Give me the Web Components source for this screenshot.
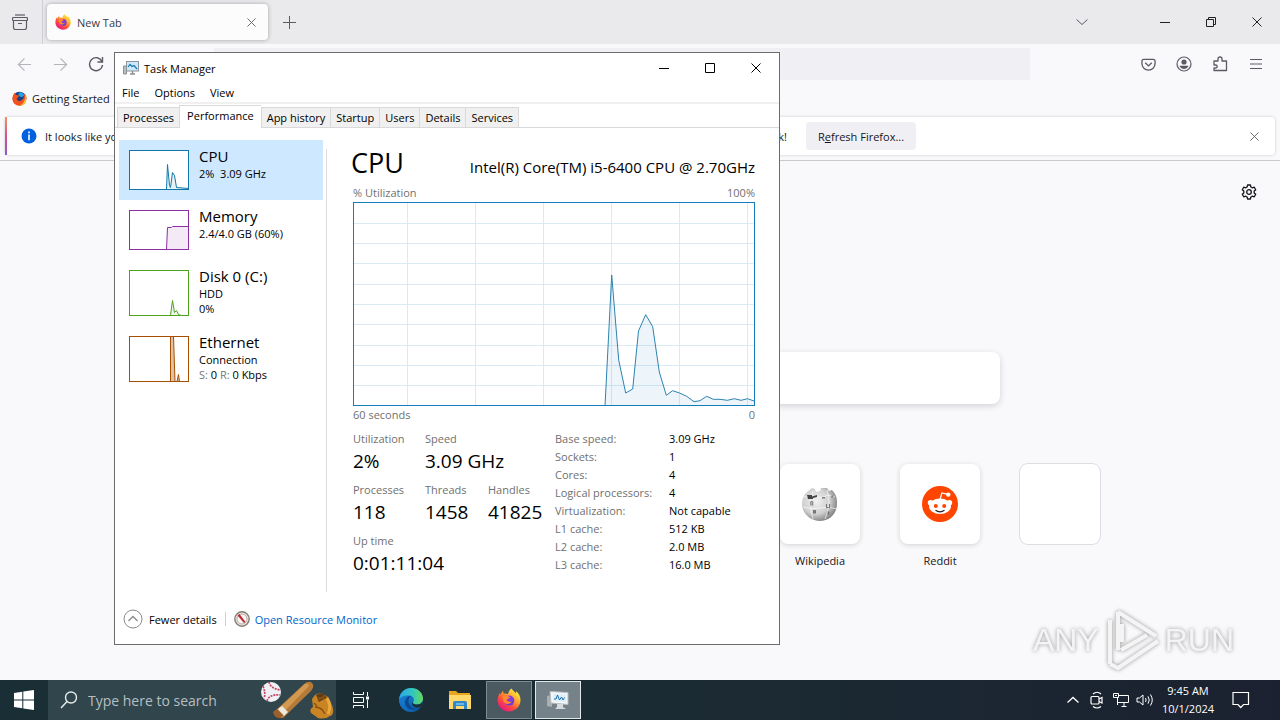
<!DOCTYPE html>
<html lang="en">
<head>
<meta charset="utf-8">
<meta name="viewport" content="width=device-width, initial-scale=1">
<title>Desktop</title>
<style>
  html, body {
    margin: 0;
    height: 100%;
    overflow: hidden;
  }

  body {
    font-family: "Open Sans", "Noto Sans", sans-serif;
    font-size: 11px;
    color: #15141a;
  }
</style>
</head>
<body>
<desktop-screen>
  <browser-window slot="window"></browser-window>
  <task-manager slot="window"></task-manager>
  <desktop-watermark slot="overlay"></desktop-watermark>
  <task-bar slot="taskbar"></task-bar>
</desktop-screen>

<script>
// Icon set, every entry is [viewBox, markup]
const ICONS = {
  archive: ['0 0 16 16', '<g fill="none" stroke="currentColor" stroke-width="1.200"><path d="M3 1h10"/><rect x=".5" y="3.500" width="15" height="3" rx="1"/><path d="M1.500 6.500v7q0 2 2 2h9q2 0 2-2v-7M6 9.500h4"/></g>'],
  close: ['0 0 10 10', '<path d="M.5.5l9 9M9.500.5l-9 9" stroke="currentColor"/>'],
  plus: ['0 0 13 13', '<path d="M6.500 0v13M0 6.500h13" stroke="currentColor"/>'],
  chevronDown: ['0 0 12 8', '<path d="M.5 1.500l5.500 5 5.500-5" fill="none" stroke="currentColor"/>'],
  chevronUp: ['0 0 12 8', '<path d="M.5 6.500l5.500-5 5.500 5" fill="none" stroke="currentColor" stroke-width="1.300"/>'],
  minimize: ['0 0 10 10', '<path d="M0 5.500h10" stroke="currentColor"/>'],
  maximize: ['0 0 10 10', '<path d="M.5.5h9v9h-9z" fill="none" stroke="currentColor"/>'],
  restore: ['0 0 10 10', '<path d="M.5 2.500h7v7h-7zM2.500 2.500v-2h7v7h-2" fill="none" stroke="currentColor"/>'],
  back: ['0 0 16 16', '<path d="M15 8H1.500M8 1.500L1.500 8 8 14.500" fill="none" stroke="currentColor" stroke-width="1.300"/>'],
  forward: ['0 0 16 16', '<path d="M1 8h13.500M8 1.500L14.500 8 8 14.500" fill="none" stroke="currentColor" stroke-width="1.300"/>'],
  reload: ['0 0 16 16', '<path d="M14 5.500A6.500 6.500 0 1 0 14.500 9M14.500 1v5h-5" fill="none" stroke="currentColor" stroke-width="1.400"/>'],
  pocket: ['0 0 16 16', '<g fill="none" stroke="currentColor" stroke-width="1.400"><path d="M3 2.500h10q2 0 2 2V7a7 7 0 0 1-14 0V4.500q0-2 2-2z"/><path d="M4.500 6.200L8 9.500l3.500-3.300"/></g>'],
  account: ['0 0 16 16', '<circle cx="8" cy="8" r="7" fill="none" stroke="currentColor" stroke-width="1.200"/><circle cx="8" cy="6" r="2.600" fill="currentColor"/><path d="M3.500 9.800h9q-1.500 3.200-4.500 3.200T3.500 9.800z" fill="currentColor"/>'],
  extension: ['0 0 16 16', '<path d="M2 5h4V3q0-2 2-2t2 2v2h4.500v9.500H2V12h1.500q1.700 0 1.700-1.500T3.500 9H2z" fill="none" stroke="currentColor" stroke-width="1.300" stroke-linejoin="round"/>'],
  menu: ['0 0 14 12', '<path d="M1 1.500h12M1 6h12M1 10.500h12" stroke="currentColor" stroke-width="1.200"/>'],
  gear: ['0 0 16 16', '<g fill="none" stroke="currentColor" stroke-width="1.300" stroke-linejoin="round"><circle cx="8" cy="8" r="2.300"/><path d="M6.600 1h2.800l.5 2 1.400.8 2-.6 1.400 2.500-1.500 1.400v1.800l1.500 1.400-1.400 2.500-2-.6-1.400.8-.5 2H6.600l-.5-2-1.400-.8-2 .6-1.400-2.500 1.500-1.400V7.100L1.300 5.700l1.400-2.500 2 .6 1.400-.8z"/></g>'],
  info: ['0 0 16 16', '<circle cx="8" cy="8" r="7.500" fill="#0061e0"/><path d="M7.200 3.600h1.600v1.700H7.200zM7.200 6.600h1.600v5.600H7.200z" fill="#fff"/>'],
  firefox: ['0 0 24 24', `
    <defs>
      <linearGradient id="ff-a" x1=".85" y1=".1" x2=".2" y2=".95"><stop offset="0" stop-color="#fff044"/><stop offset=".35" stop-color="#ffa22e"/><stop offset=".65" stop-color="#ff4d3d"/><stop offset="1" stop-color="#e31587"/></linearGradient>
      <linearGradient id="ff-b" x1="0" y1="0" x2="1" y2="1"><stop offset="0" stop-color="#a73ae8"/><stop offset="1" stop-color="#5b3dcf"/></linearGradient>
    </defs>
    <path d="M14.500.5c1 2 3.200 3.200 4.600 4.800.2-.8 0-1.600-.3-2.400C22 5.200 23.700 8.800 23.500 12.600 23.200 18.800 18.200 23.500 12 23.500S.6 18.700.6 12.500c0-3.200 1-5.600 2.300-7.500l.6 1.600C4.300 5.200 5 3.800 6.200 2.800c-.2 1 .1 1.900.6 2.700 1.400-.3 2.900 0 4.200.6C11.600 3.600 12.600 1.700 14.500.5z" fill="url(#ff-a)"/>
    <circle cx="12.300" cy="12.600" r="5" fill="url(#ff-b)"/>
    <path d="M5.500 8.200c2-1.800 4.200-1.300 5.700.2 1 .1 1.700.4 1.600 1-.6 1.300-2.500 1-3.200 2.200.2 2 3 2.900 5.300 1.700-1.300 3-6.400 3.800-8.300.2-1-1.700-1.300-3.400-1.100-5.300z" fill="#ff8a2b"/>`],
  firefoxClassic: ['0 0 24 24', `
    <circle cx="12" cy="12" r="11" fill="#1b3f86"/>
    <path d="M12 2a9 9 0 0 1 8 6l-6 2-4-4z" fill="#23a5dd"/>
    <path d="M22 6c3 8-1 17.500-10 17.500C5.500 23.500.5 18.500.7 12 .8 7.500 3 4 5 2.500c0 2 .5 3 1.500 4l5 .5-2 3.500-2 2c.5 4 6 4.500 8.500 1.500 3-2 4-5 3-8.500z" fill="#f4511e"/>
    <path d="M22 6c3 8-1 17.500-10 17.500 6-2.500 9-7.500 10-17.500z" fill="#ffca28"/>`],
  tmSmall: ['0 0 16 14', '<path d="M.5 5h3v8h-3z" fill="#b9bec3" stroke="#8b9197"/><rect x="3.500" y=".5" width="12" height="9.500" fill="#cfe8f7" stroke="#8a949c"/><path d="M5 6l2-2.500 2 2 2-1L14 8" fill="none" stroke="#1478b4" stroke-width="1.200"/><path d="M7 13h5M9.500 10v3" stroke="#8b9197" stroke-width="1.500"/>'],
  tmLarge: ['0 0 24 20', '<path d="M1 6l5-1v12l-5-1z" fill="#a9aeb2"/><path d="M4 1.500l18 1v12L5 13z" fill="#f4f6f7" stroke="#b6bdc2"/><path d="M7 4l13 .6v7.600L7.600 11z" fill="#dceefa"/><path d="M8 9h2l1.500-4 2 5 2-3 1.500 3 1.500-2.500" fill="none" stroke="#1b6fae"/><path d="M11 14h6v3l3 2H9l2-2z" fill="#d5d9dc"/>'],
  resource: ['0 0 16 16', '<circle cx="8" cy="8" r="7.200" fill="#e9e6e0" stroke="#857f78" stroke-width="1.400"/><circle cx="8" cy="8" r="5" fill="#f7f6f2" stroke="#b6b0a8"/><path d="M3.500 4.500l2-1.500 6 8-1.500 1z" fill="#c22531"/>'],
  fewer: ['0 0 20 20', '<circle cx="10" cy="10" r="9" fill="none" stroke="#8a8a8a"/><path d="M5.500 12L10 7.500l4.500 4.500" fill="none" stroke="#8a8a8a" stroke-width="1.300"/>'],
  wikipedia: ['0 0 36 36', `
    <defs><radialGradient id="wk" cx=".4" cy=".4" r=".65"><stop offset="0" stop-color="#f2f2f2"/><stop offset=".6" stop-color="#cfcfcf"/><stop offset="1" stop-color="#7c7c7c"/></radialGradient></defs>
    <path d="M6 5l4-3 3 1 1 3 4-1 1-3 6 0 2 3 3-1a18 18 0 0 1 5 14c0 10-8 17-17 17S0 28 0 18Q0 10 6 5z" fill="url(#wk)"/>
    <path d="M2 11q6-2 12 0t12-2l7 2M1 21q8 3 17 1t17 1M11 5q-5 12 0 28M25 4q5 14-2 29" fill="none" stroke="#fff" stroke-width=".8" opacity=".8"/>
    <g fill="#444"><path d="M5 9h5v1.500l5-1.500v2l-4 1v1H6z"/><g opacity=".65"><path d="M8 16.500q0-1.500 1.700-1.500t1.700 1.500-.8 2h.8v1H10v-1.500q.8-1.700-.2-1.700t-.2 1.700v1.500H8v-1h.8q-.8-.5-.8-2zM24 18h1v3h2v-3h1v4h-4zM11 24h3v3.500h-3zM20 11h3v1.500h-3zM26 25l1.500 1-1 3-1-1zM30 9l1.500 2-2.500.5z"/></g></g>`],
  reddit: ['0 0 36 36', `
    <circle cx="18" cy="18" r="18" fill="#ff4500"/>
    <path d="M18 14l1.800-7 6 1.300" fill="none" stroke="#fff" stroke-width="1.200"/><circle cx="26.300" cy="8.600" r="2.200" fill="#fff"/>
    <circle cx="8.500" cy="16.800" r="2.700" fill="#fff"/><circle cx="27.500" cy="16.800" r="2.700" fill="#fff"/>
    <ellipse cx="18" cy="20.300" rx="11" ry="7.800" fill="#fff"/>
    <circle cx="13.800" cy="20" r="2" fill="#ff4500"/><circle cx="22.200" cy="20" r="2" fill="#ff4500"/>
    <path d="M13.500 24.300q4.500 3 9 0" fill="none" stroke="#222" stroke-width="1.200"/>`],
  windows: ['0 0 20 20', '<path d="M0 3l8.300-1.200v7.700H0zM9.300 1.600L20 0v9.500H9.300zM0 10.500h8.300v7.700L0 17zM9.300 10.500H20V20L9.300 18.400z" fill="#fff"/>'],
  search: ['0 0 18 18', '<circle cx="11" cy="6.500" r="5.500" fill="none" stroke="#e6eaeb" stroke-width="1.400"/><path d="M7 10.500L1 17" stroke="#e6eaeb" stroke-width="1.500"/>'],
  baseball: ['0 0 74 38', `
    <circle cx="10" cy="11" r="10" fill="#eef0f5"/>
    <path d="M2 5q3 8 1 12M8 1q1 6 11 8M6 20q2-7 13-6" fill="none" stroke="#c8435f" stroke-width="1.700" stroke-dasharray="2 1"/>
    <path d="M13 31L43 3q5-4 8-1t-1 8L22 37q-8 0-9-6z" fill="#b57a38"/><path d="M16 29L44 3q4-1 4 2L20 34z" fill="#d29a50"/>
    <path d="M17 28l4-3 6 6-4 4z" fill="#eee9df"/><path d="M12 31l4-3 6 6-3 3q-6 0-7-6z" fill="#9b602d"/>
    <path d="M50 32q-2-4 2-6l-1-8 3-4q4-3 8-1l5 3 3 6q4 8 1 12-7 5-14 3z" fill="#c98423"/>
    <path d="M55 14l3 7q3-2 8-4l-3-4q-4-2-8 1z" fill="#5f3d18"/><path d="M56 17h8M57 20l7-6M54 26q7 0 10 7M53 22l3 3" fill="none" stroke="#8a5212" stroke-width="1.400"/><path d="M66 17q5 8 1 16" fill="none" stroke="#eaa83f" stroke-width="3"/>`],
  taskView: ['0 0 18 16', '<g fill="none" stroke="#fff"><path d="M1.500 0v2.500h10V0M1.500 16v-2.500h10V16M1.500 5.500h10v5h-10zM15.500 0v4M15.500 8v8"/></g><path d="M14 4.500h3v3h-3z" fill="#fff"/>'],
  edge: ['0 0 24 24', `
    <defs>
      <linearGradient id="ed-a" x1="0" y1=".3" x2="1" y2=".3"><stop offset="0" stop-color="#2aa8e6"/><stop offset=".55" stop-color="#33c6c0"/><stop offset="1" stop-color="#64d95c"/></linearGradient>
      <linearGradient id="ed-b" x1="0" y1="0" x2="1" y2="1"><stop offset="0" stop-color="#1b86dc"/><stop offset="1" stop-color="#0c58a6"/></linearGradient>
    </defs>
    <circle cx="12" cy="12" r="12" fill="url(#ed-b)"/>
    <path d="M.2 11C1 4.500 6 0 12 0c7 0 12 5 12 10.500 0 4-3 6-6 6s-4.500-1.300-4-2.300c2-2.500.5-6.200-3.500-6.700C5.500 7 1.500 9 .2 11z" fill="url(#ed-a)"/>
    <path d="M9 8.500q-5 4-2 9.500 4 6.500 14 2-5 2-8.500-1T9.500 13q-.5-3 2.500-4.500-1.500-.5-3 0z" fill="#0a4a92"/>
    <path d="M14 14.200q-.5 2.300 4 2.300 4 0 5.600-3.500.3 3-1.100 5.500-5 2.500-8.500-.3-2-2.500 0-4z" fill="#1c3038"/>`],
  explorer: ['0 0 24 20', '<path d="M1 1h7l2 2h12v4H1z" fill="#e8a51d"/><path d="M1 5h22v14H1z" fill="#ffd96b"/><path d="M5 19v-6q0-2 2-2h10q2 0 2 2v6h-3v-3H8v3z" fill="#2f87c8"/><path d="M8 13h8v2H8z" fill="#6cb6e8"/>'],
  camera: ['0 0 14 18', '<g fill="none" stroke="#fff" stroke-width="1.200"><rect x="1" y="5.500" width="8" height="7.500" rx="1"/><path d="M9 8l3-1.500V12L9 10.500M3 3q4-3.500 8 0M3 15.500q4 3 8 0"/></g>'],
  network: ['0 0 18 16', '<g fill="none" stroke="#fff"><path d="M6 3.500h10.500v7H6M5.500 5v8M9.500 14.500h5M12 10.500v4"/><path d="M1.500 1.500h5v4h-5z"/></g><path d="M3 3h2v1H3z" fill="#fff"/>'],
  volume: ['0 0 18 14', '<g fill="none" stroke="#fff"><path d="M1 5h2.500L7 2v10L3.500 9H1z"/><path d="M9.500 5q1.200 2 0 4M12 3.300q2.500 3.700 0 7.400M14.500 1.500q3.500 5.500 0 11" /></g>'],
  notification: ['0 0 18 18', '<path d="M1 1.500h15.500v12h-5l-2.800 3-2.700-3H1z" fill="none" stroke="#fff" stroke-width="1.200"/>'],
  play: ['0 0 60 64', '<g fill="none" stroke="currentColor" stroke-width="4" stroke-linejoin="round"><path d="M16 4l38 24M16 4v38M8 12v44M8 56l8 4 40-27M19 42l26-15M20 16v18"/></g>'],
};

class UiIcon extends HTMLElement {
  connectedCallback() {
    const [box, markup] = ICONS[this.getAttribute('name')];
    const size = box.split(' ');
    const width = this.getAttribute('width') || size[2];
    const height = Math.round(width * size[3] / size[2]);
    this.attachShadow({ mode: 'open' }).innerHTML = `
      <style>
        :host { display: inline-flex; flex: none; }
        svg { display: block; }
      </style>
      <svg width="${width}" height="${height}" viewBox="${box}" aria-hidden="true">${markup}</svg>
    `;
  }
}

class DesktopScreen extends HTMLElement {
  connectedCallback() {
    this.attachShadow({ mode: 'open' }).innerHTML = `
      <style>
        :host {
          display: flex;
          flex-direction: column;
          height: 100vh;
        }
        main {
          position: relative;
          display: flex;
          flex: 1;
          min-height: 0;
        }
      </style>
      <main>
        <slot name="window"></slot>
        <slot name="overlay"></slot>
      </main>
      <slot name="taskbar"></slot>
    `;
  }
}

class BrowserWindow extends HTMLElement {
  connectedCallback() {
    this.attachShadow({ mode: 'open' }).innerHTML = `
      <style>
        :host {
          display: flex;
          flex-direction: column;
          flex: 1;
          min-width: 0;
          background: #f9f9fb;
        }
        button {
          display: inline-flex;
          align-items: center;
          justify-content: center;
          padding: 0;
          border: 0;
          background: none;
          font: inherit;
          color: #5b5b66;
        }
        input {
          border: 0;
          outline: 0;
        }
        .tabs {
          display: flex;
          align-items: center;
          height: 44px;
          background: #eaeaed;
        }
        .view {
          width: 43px;
          height: 44px;
          padding-right: 2px;
          margin-right: 4px;
          border-right: 1px solid #cfcfd8;
        }
        .tab {
          display: flex;
          align-items: center;
          gap: 6px;
          box-sizing: border-box;
          width: 221px;
          height: 36px;
          padding: 0 12px 0 8px;
          border-radius: 4px;
          background: #fcfcfd;
          box-shadow: 0 0 4px rgba(0, 0, 0, .3);
          color: #3c3b44;
        }
        .tab span { flex: 1; }
        .new { width: 42px; height: 36px; }
        .list { margin-left: auto; width: 40px; height: 36px; margin-right: 40px; }
        .control { width: 46px; height: 36px; color: #222; }
        .nav {
          display: flex;
          align-items: center;
          gap: 2px;
          height: 40px;
          padding: 0 7px;
        }
        .nav button { width: 34px; height: 34px; }
        .nav button:disabled { color: #b4b4bb; }
        .url {
          flex: 1;
          height: 32px;
          box-sizing: border-box;
          margin: 0 99px 0 99px;
          min-width: 0;
          background: #f0f0f4;
        }
        .bookmarks {
          display: flex;
          height: 29px;
          padding: 0 12px;
        }
        .bookmarks a {
          display: inline-flex;
          align-items: center;
          gap: 5px;
          color: #15141a;
          text-decoration: none;
        }
        .notice {
          display: flex;
          align-items: center;
          height: 38px;
          margin: 4px 5px 5px;
          padding-right: 15px;
          border-radius: 4px;
          background: #fff;
          box-shadow: 0 0 3px rgba(0, 0, 0, .2);
        }
        .notice i {
          width: 2px;
          height: 100%;
          margin-right: 14px;
          background: linear-gradient(#f0955c, #d8508c 50%, #9059c8);
        }
        .notice p {
          display: flex;
          justify-content: space-between;
          width: 742px;
          margin: 0 19px 0 8px;
          white-space: nowrap;
        }
        .refresh {
          height: 28px;
          padding: 0 12px;
          border-radius: 4px;
          background: #f0f0f4;
          color: #15141a;
        }
        .dismiss { width: 12px; height: 28px; margin-left: auto; }
        .page {
          display: flex;
          flex-direction: column;
          align-items: center;
          flex: 1;
          min-height: 0;
          border-top: 1px solid #c9c9d0;
        }
        .gear {
          align-self: flex-end;
          margin: 23px 23px 152px 0;
          color: #15141a;
        }
        .search {
          width: 720px;
          max-width: 90%;
          height: 52px;
          box-sizing: border-box;
          flex: none;
          border-radius: 8px;
          background: #fff;
          box-shadow: 0 2px 6px rgba(58, 57, 68, .2);
        }
        .sites {
          display: flex;
          gap: 40px;
          margin: 60px 0 0;
          padding: 0;
          list-style: none;
        }
        .sites a {
          display: flex;
          flex-direction: column;
          gap: 9px;
          align-items: center;
          width: 80px;
          color: #15141a;
          text-decoration: none;
        }
        .tile {
          display: flex;
          align-items: center;
          justify-content: center;
          width: 80px;
          height: 80px;
          border-radius: 8px;
          background: #fff;
          box-shadow: 0 1px 5px rgba(58, 57, 68, .2);
        }
        .tile.empty {
          box-shadow: 0 0 0 1px #dcdce2;
        }
      </style>
      <div class="tabs">
        <button class="view" aria-label="View"><ui-icon name="archive"></ui-icon></button>
        <div class="tab">
          <ui-icon name="firefox" width="16"></ui-icon>
          <span>New Tab</span>
          <button aria-label="Close tab"><ui-icon name="close" width="9"></ui-icon></button>
        </div>
        <button class="new" aria-label="Open a new tab"><ui-icon name="plus"></ui-icon></button>
        <button class="list" aria-label="List all tabs"><ui-icon name="chevronDown"></ui-icon></button>
        <button class="control" aria-label="Minimize"><ui-icon name="minimize"></ui-icon></button>
        <button class="control" aria-label="Restore"><ui-icon name="restore"></ui-icon></button>
        <button class="control" aria-label="Close"><ui-icon name="close"></ui-icon></button>
      </div>
      <div class="nav">
        <button disabled aria-label="Back"><ui-icon name="back" width="15"></ui-icon></button>
        <button disabled aria-label="Forward"><ui-icon name="forward" width="15"></ui-icon></button>
        <button aria-label="Reload"><ui-icon name="reload"></ui-icon></button>
        <input class="url" type="text" aria-label="Address">
        <button aria-label="Pocket"><ui-icon name="pocket" width="15"></ui-icon></button>
        <button aria-label="Account"><ui-icon name="account"></ui-icon></button>
        <button aria-label="Extensions"><ui-icon name="extension"></ui-icon></button>
        <button aria-label="Menu"><ui-icon name="menu"></ui-icon></button>
      </div>
      <div class="bookmarks">
        <a href="#"><ui-icon name="firefoxClassic" width="15"></ui-icon>Getting Started</a>
      </div>
      <div class="notice">
        <i></i>
        <ui-icon name="info"></ui-icon>
        <p><span>It looks like you haven’t started Firefox in a while.</span><span>welcome back!</span></p>
        <button class="refresh"><span>R<u>e</u>fresh Firefox...</span></button>
        <button class="dismiss" aria-label="Dismiss"><ui-icon name="close" width="9"></ui-icon></button>
      </div>
      <div class="page">
        <button class="gear" aria-label="Personalize new tab"><ui-icon name="gear"></ui-icon></button>
        <input class="search" type="text" aria-label="Search the web">
        <ul class="sites">
          <li><a href="#"><span class="tile"></span></a></li>
          <li><a href="#"><span class="tile"></span></a></li>
          <li><a href="#"><span class="tile"></span></a></li>
          <li><a href="#"><span class="tile"></span></a></li>
          <li><a href="#"><span class="tile"></span></a></li>
          <li><a href="#"><span class="tile"><ui-icon name="wikipedia"></ui-icon></span>Wikipedia</a></li>
          <li><a href="#"><span class="tile"><ui-icon name="reddit"></ui-icon></span>Reddit</a></li>
          <li><a href="#"><span class="tile empty"></span></a></li>
        </ul>
      </div>
    `;
  }
}

// Sidebar entry: thumbnail graph, title and slotted detail lines
class PerfItem extends HTMLElement {
  connectedCallback() {
    const height = this.getAttribute('height');
    const color = this.getAttribute('color');
    this.attachShadow({ mode: 'open' }).innerHTML = `
      <style>
        :host { display: block; }
        button {
          display: flex;
          gap: 10px;
          width: 100%;
          padding: 6px 10px 10px;
          border: 0;
          background: none;
          font: inherit;
          line-height: 15px;
          color: #000;
          text-align: left;
        }
        :host([selected]) button { background: #cde8ff; }
        svg {
          flex: none;
          margin-top: 4px;
          background: #fff;
        }
        strong {
          display: block;
          font-size: 15px;
          font-weight: 400;
          line-height: 20px;
        }
      </style>
      <button>
        <svg width="60" height="${height}" aria-hidden="true">
          <path d="${this.getAttribute('path')}" fill="${color}" fill-opacity="${this.getAttribute('tint') || '.1'}" stroke="${color}"/>
          <rect x=".5" y=".5" width="59" height="${height - 1}" fill="none" stroke="${color}"/>
        </svg>
        <span><strong>${this.getAttribute('label')}</strong><slot></slot></span>
      </button>
    `;
  }
}

class CpuGraph extends HTMLElement {
  connectedCallback() {
    const columns = [54, 122, 190, 258, 326, 394];
    const rows = [21, 41, 61, 82, 102, 122, 143, 163, 183];
    const line = '252,204 258.700,73 265.700,158 272.700,191 279.700,187 285.500,129 292.700,112.700 299.700,124.700 306.300,170 313.300,193.300 319.700,188.700 326.500,191 333.700,194.300 341,199.700 347,198.700 353.700,194.300 360.300,197.300 367,197.300 374.300,198.300 381.300,196.700 388,198.300 394.500,196.700 401,199';
    this.attachShadow({ mode: 'open' }).innerHTML = `
      <style>
        :host { display: block; }
        svg { display: block; width: 100%; }
      </style>
      <svg viewBox="0 0 402 204" role="img" aria-label="CPU utilization over 60 seconds">
        <g stroke="#d9eaf4">
          ${columns.map(x => `<path d="M${x + .5} 0v204"/>`).join('')}
          ${rows.map(y => `<path d="M0 ${y + .5}h402"/>`).join('')}
        </g>
        <polygon points="${line} 401,204" fill="#1177bb" fill-opacity=".07"/>
        <polyline points="${line}" fill="none" stroke="#2b83b0"/>
        <rect x=".5" y=".5" width="401" height="203" fill="none" stroke="#117dbb"/>
      </svg>
    `;
  }
}

class TaskManager extends HTMLElement {
  connectedCallback() {
    const details = [
      ['Base speed:', '3.09 GHz'],
      ['Sockets:', '1'],
      ['Cores:', '4'],
      ['Logical processors:', '4'],
      ['Virtualization:', 'Not capable'],
      ['L1 cache:', '512 KB'],
      ['L2 cache:', '2.0 MB'],
      ['L3 cache:', '16.0 MB'],
    ];
    this.attachShadow({ mode: 'open' }).innerHTML = `
      <style>
        /* floats over the browser window */
        :host {
          position: absolute;
          top: 52px;
          left: 114px;
          display: flex;
          flex-direction: column;
          box-sizing: border-box;
          width: 666px;
          border: 1px solid #6b6b6b;
          background: #fff;
          color: #000;
        }
        button {
          padding: 0;
          border: 0;
          background: none;
          font: inherit;
          color: inherit;
        }
        .title {
          display: flex;
          align-items: center;
          height: 30px;
          padding-left: 8px;
        }
        .title span { flex: 1; margin-left: 5px; }
        .title button {
          display: flex;
          align-items: center;
          justify-content: center;
          width: 46px;
          height: 28px;
        }
        .menu {
          display: flex;
          gap: 15px;
          height: 19px;
          padding-left: 7px;
          border-bottom: 2px solid #f0f0f0;
          line-height: 19px;
        }
        .tabs {
          display: flex;
          align-items: flex-end;
          height: 23px;
          padding-left: 2px;
          border-bottom: 1px solid #d9d9d9;
        }
        .tabs button {
          height: 20px;
          padding: 0 5px;
          border: 1px solid #d9d9d9;
          border-width: 1px 0 0 1px;
          background: #f0f0f0;
          white-space: nowrap;
        }
        .tabs button:last-child { border-right-width: 1px; }
        .tabs button[aria-selected="true"] {
          height: 23px;
          margin-bottom: -1px;
          padding: 0 7px 3px;
          background: #fff;
        }
        .body { display: flex; padding: 12px 24px 0 4px; }
        nav {
          width: 204px;
          flex: none;
          margin-right: 3px;
        }
        nav small { font-size: 11px; color: #777; }
        .rule {
          width: 1px;
          margin: 9px 24px 0 0;
          background: #dcdcdc;
        }
        section { flex: 1; min-width: 0; padding: 5px 0 16px 2px; }
        .heading {
          display: flex;
          align-items: baseline;
          justify-content: space-between;
          height: 39px;
        }
        h1 {
          margin: 0 0 0 -2px;
          font-size: 27px;
          font-weight: 400;
          line-height: 36px;
        }
        .model { font-size: 15px; }
        .caption {
          display: flex;
          justify-content: space-between;
          line-height: 18px;
          color: #707070;
        }
        .numbers { display: flex; padding-top: 6px; }
        dl {
          display: grid;
          grid-template-columns: 72px 63px 67px;
          row-gap: 7px;
          margin: 0;
        }
        dl div { white-space: nowrap; }
        .wide { grid-column: span 2; }
        dt { line-height: 18px; color: #707070; }
        dd { margin: 0; font-size: 19px; line-height: 26px; }
        table { align-self: flex-start; border-spacing: 0; line-height: 18px; }
        th {
          width: 114px;
          padding: 0;
          font-weight: 400;
          text-align: left;
          color: #707070;
          white-space: nowrap;
        }
        td { padding: 0; white-space: nowrap; }
        footer {
          display: flex;
          align-items: center;
          height: 50px;
          padding: 2px 0 0 8px;
        }
        footer button, footer a {
          display: flex;
          align-items: center;
          gap: 6px;
        }
        footer button { padding-right: 8px; }
        footer a {
          gap: 5px;
          padding: 0 8px;
          color: #0066cc;
          text-decoration: none;
        }
        footer hr {
          width: 1px;
          height: 14px;
          margin: 0;
          border: 0;
          background: #d0d0d0;
        }
      </style>
      <div class="title">
        <ui-icon name="tmSmall"></ui-icon>
        <span>Task Manager</span>
        <button aria-label="Minimize"><ui-icon name="minimize"></ui-icon></button>
        <button aria-label="Maximize"><ui-icon name="maximize"></ui-icon></button>
        <button aria-label="Close"><ui-icon name="close"></ui-icon></button>
      </div>
      <div class="menu">
        <button>File</button>
        <button>Options</button>
        <button>View</button>
      </div>
      <div class="tabs" role="tablist">
        <button role="tab">Processes</button>
        <button role="tab" aria-selected="true">Performance</button>
        <button role="tab">App history</button>
        <button role="tab">Startup</button>
        <button role="tab">Users</button>
        <button role="tab">Details</button>
        <button role="tab">Services</button>
      </div>
      <div class="body">
        <nav>
          <perf-item selected label="CPU" height="40" color="#1177a8" path="M37.500 39.500l1-25 2 21 1 2 2-15 2 3 2 12 12 1">2%&nbsp; 3.09 GHz</perf-item>
          <perf-item label="Memory" height="40" color="#8b2fa5" path="M37.500 39.500l1-22 4 0 1-1h16v23">2.4/4.0 GB (60%)</perf-item>
          <perf-item label="Disk 0 (C:)" height="46" color="#4da31c" path="M41.500 45.500l2-15 2 12 2-2 2 4 3 1">HDD<br>0%</perf-item>
          <perf-item label="Ethernet" height="46" color="#a74f01" tint=".35" path="M41.500 45.500V.5h3l1.500 45M48 45.500l1.500-7 1 7">Connection<br><small>S:</small> 0 <small>R:</small> 0 Kbps</perf-item>
        </nav>
        <div class="rule"></div>
        <section>
          <div class="heading"><h1>CPU</h1><span class="model">Intel(R) Core(TM) i5-6400 CPU @ 2.70GHz</span></div>
          <div class="caption"><span>% Utilization</span><span>100%</span></div>
          <cpu-graph></cpu-graph>
          <div class="caption"><span>60 seconds</span><span>0</span></div>
          <div class="numbers">
            <dl>
              <div><dt>Utilization</dt><dd>2%</dd></div>
              <div class="wide"><dt>Speed</dt><dd>3.09 GHz</dd></div>
              <div><dt>Processes</dt><dd>118</dd></div>
              <div><dt>Threads</dt><dd>1458</dd></div>
              <div><dt>Handles</dt><dd>41825</dd></div>
              <div class="wide"><dt>Up time</dt><dd>0:01:11:04</dd></div>
            </dl>
            <table>
              ${details.map(([name, value]) => `<tr><th scope="row">${name}</th><td>${value}</td></tr>`).join('')}
            </table>
          </div>
        </section>
      </div>
      <footer>
        <button><ui-icon name="fewer"></ui-icon>Fewer details</button>
        <hr>
        <a href="#"><ui-icon name="resource"></ui-icon>Open Resource Monitor</a>
      </footer>
    `;
  }
}

class DesktopWatermark extends HTMLElement {
  connectedCallback() {
    this.attachShadow({ mode: 'open' }).innerHTML = `
      <style>
        :host {
          position: absolute;
          right: 46px;
          bottom: 8px;
          display: flex;
          align-items: center;
          gap: 3px;
          color: #f4f4f5;
          font: 32px "Liberation Sans Narrow", "Liberation Sans", sans-serif;
          filter: drop-shadow(0 0 2px rgba(0, 0, 0, .4));
          pointer-events: none;
        }
      </style>
      <span>ANY</span>
      <ui-icon name="play"></ui-icon>
      <span>RUN</span>
    `;
  }
}

class TaskBar extends HTMLElement {
  connectedCallback() {
    this.attachShadow({ mode: 'open' }).innerHTML = `
      <style>
        :host {
          display: flex;
          flex: none;
          height: 40px;
          background: linear-gradient(90deg, #1a2e35, #1b2a33 60%, #1b2130);
          color: #fff;
        }
        button {
          display: flex;
          align-items: center;
          justify-content: center;
          padding: 0;
          border: 0;
          background: none;
          font: inherit;
          color: inherit;
        }
        .start { width: 48px; }
        .search {
          display: flex;
          align-items: center;
          gap: 10px;
          box-sizing: border-box;
          width: 288px;
          padding: 0 1px 0 12px;
          background: #31454c;
        }
        .search input {
          flex: 1;
          min-width: 0;
          padding: 0;
          border: 0;
          outline: 0;
          background: none;
          color: #fff;
          font: inherit;
          font-size: 14px;
        }
        .search input::placeholder { color: #b5bfc2; opacity: 1; }
        .apps {
          display: flex;
          align-items: center;
          gap: 3px;
          flex: 1;
        }
        .apps button {
          box-sizing: border-box;
          width: 46px;
          height: 38px;
        }
        .apps .view { width: 49px; }
        .apps .open { border: 1px solid #7e8b90; background: #4a5a60; }
        .apps .active { border: 1px solid #e4e8e9; background: #75828a; }
        .tray { display: flex; padding-right: 17px; }
        .tray button { width: 24px; }
        .tray .clock {
          width: 62px;
          flex-direction: column;
          font-size: 11px;
          line-height: 18px;
        }
        .tray .action { width: 44px; }
      </style>
      <button class="start" aria-label="Start"><ui-icon name="windows"></ui-icon></button>
      <label class="search">
        <ui-icon name="search"></ui-icon>
        <input type="text" placeholder="Type here to search" aria-label="Type here to search">
        <ui-icon name="baseball"></ui-icon>
      </label>
      <div class="apps">
        <button class="view" aria-label="Task View"><ui-icon name="taskView"></ui-icon></button>
        <button aria-label="Microsoft Edge"><ui-icon name="edge"></ui-icon></button>
        <button aria-label="File Explorer"><ui-icon name="explorer"></ui-icon></button>
        <button class="open" aria-label="Firefox"><ui-icon name="firefox"></ui-icon></button>
        <button class="active" aria-label="Task Manager"><ui-icon name="tmLarge"></ui-icon></button>
      </div>
      <div class="tray">
        <button aria-label="Show hidden icons"><ui-icon name="chevronUp"></ui-icon></button>
        <button aria-label="Meet Now"><ui-icon name="camera"></ui-icon></button>
        <button aria-label="Network"><ui-icon name="network"></ui-icon></button>
        <button aria-label="Volume"><ui-icon name="volume"></ui-icon></button>
        <button class="clock"><span>9:45 AM</span><span>10/1/2024</span></button>
        <button class="action" aria-label="Notifications"><ui-icon name="notification"></ui-icon></button>
      </div>
    `;
  }
}

customElements.define('ui-icon', UiIcon);
customElements.define('perf-item', PerfItem);
customElements.define('cpu-graph', CpuGraph);
customElements.define('desktop-screen', DesktopScreen);
customElements.define('browser-window', BrowserWindow);
customElements.define('task-manager', TaskManager);
customElements.define('desktop-watermark', DesktopWatermark);
customElements.define('task-bar', TaskBar);
</script>
</body>
</html>
